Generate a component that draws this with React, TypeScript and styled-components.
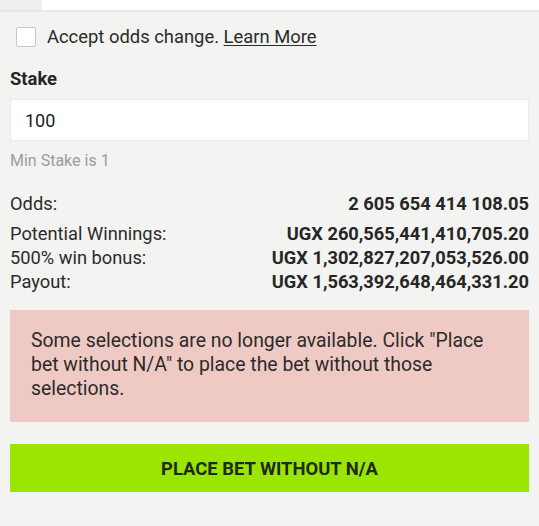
import React from "react";
import styled, { createGlobalStyle } from "styled-components";

const Global = createGlobalStyle`
  html, body { margin: 0; padding: 0; background: #f3f3f1; }
  body { font-family: Roboto, "Noto Sans", sans-serif; color: #262626; }
`;

const Page = styled.div`
  width: 539px;
  height: 526px;
  overflow: hidden;
  background: #f3f3f1;
`;

const TopStrip = styled.div`
  display: flex;
  height: 10px;
  border-bottom: 1px solid #e4e4e2;
  box-shadow: 0 1px 1px rgba(0, 0, 0, 0.03);
`;

const TopGap = styled.div`
  width: 42px;
  background: #efefed;
`;

const TopTab = styled.div`
  flex: 1;
  background: #ffffff;
`;

const Body = styled.div`
  display: flex;
  flex-direction: column;
  padding: 0 10px;
`;

const CheckRow = styled.label`
  display: flex;
  align-items: center;
  gap: 11px;
  margin: 15px 0 0 6px;
  font-size: 18.4px;
  line-height: 22px;
  color: #2b2b2b;
`;

const Box = styled.span`
  width: 18px;
  height: 18px;
  border: 1px solid #c6c6c6;
  border-radius: 2px;
  background: #fff;
  flex: none;
`;

const LearnLink = styled.a`
  color: #2b2b2b;
  text-decoration: underline;
  text-underline-offset: 2px;
`;

const Label = styled.div`
  margin-top: 21px;
  font-size: 18.4px;
  font-weight: 700;
  line-height: 20px;
  color: #262626;
`;

const Input = styled.div`
  margin-top: 10px;
  height: 42px;
  background: #fff;
  border: 1px solid #ececea;
  box-sizing: border-box;
  display: flex;
  align-items: center;
  padding: 0 14px;
  font-size: 18px;
  color: #222;
`;

const Hint = styled.div`
  margin-top: 11px;
  font-size: 16px;
  line-height: 18px;
  color: #9c9c9c;
`;

const Summary = styled.div`
  margin-top: 22px;
  display: flex;
  flex-direction: column;
`;

const Row = styled.div<{ $tall?: boolean }>`
  display: flex;
  justify-content: space-between;
  align-items: baseline;
  font-size: 18.3px;
  line-height: 24px;
  height: ${(p) => (p.$tall ? "30px" : "24px")};
`;

const RowLabel = styled.span`
  color: #2b2b2b;
`;

const RowValue = styled.span`
  font-weight: 700;
  color: #262626;
`;

const Notice = styled.div`
  margin-top: 16px;
  background: #efcac4;
  padding: 19px 21px 21px;
  font-size: 19.4px;
  line-height: 24px;
  color: #2e2a2a;
`;

const PlaceButton = styled.button`
  margin-top: 22px;
  height: 48px;
  border: none;
  background: #9be600;
  font-family: inherit;
  font-size: 18.4px;
  font-weight: 700;
  color: #1d2a16;
  cursor: pointer;
`;

const rows = [
  { label: "Odds:", value: "2 605 654 414 108.05", tall: true },
  { label: "Potential Winnings:", value: "UGX 260,565,441,410,705.20" },
  { label: "500% win bonus:", value: "UGX 1,302,827,207,053,526.00" },
  { label: "Payout:", value: "UGX 1,563,392,648,464,331.20" },
];

export default function App() {
  return (
    <Page>
      <Global />
      <TopStrip>
        <TopGap />
        <TopTab />
      </TopStrip>
      <Body>
        <CheckRow>
          <Box />
          <span>
            Accept odds change. <LearnLink>Learn More</LearnLink>
          </span>
        </CheckRow>
        <Label>Stake</Label>
        <Input>100</Input>
        <Hint>Min Stake is 1</Hint>
        <Summary>
          {rows.map((r) => (
            <Row key={r.label} $tall={r.tall}>
              <RowLabel>{r.label}</RowLabel>
              <RowValue>{r.value}</RowValue>
            </Row>
          ))}
        </Summary>
        <Notice>
          Some selections are no longer available. Click "Place bet without N/A" to place the bet
          without those selections.
        </Notice>
        <PlaceButton>PLACE BET WITHOUT N/A</PlaceButton>
      </Body>
    </Page>
  );
}
